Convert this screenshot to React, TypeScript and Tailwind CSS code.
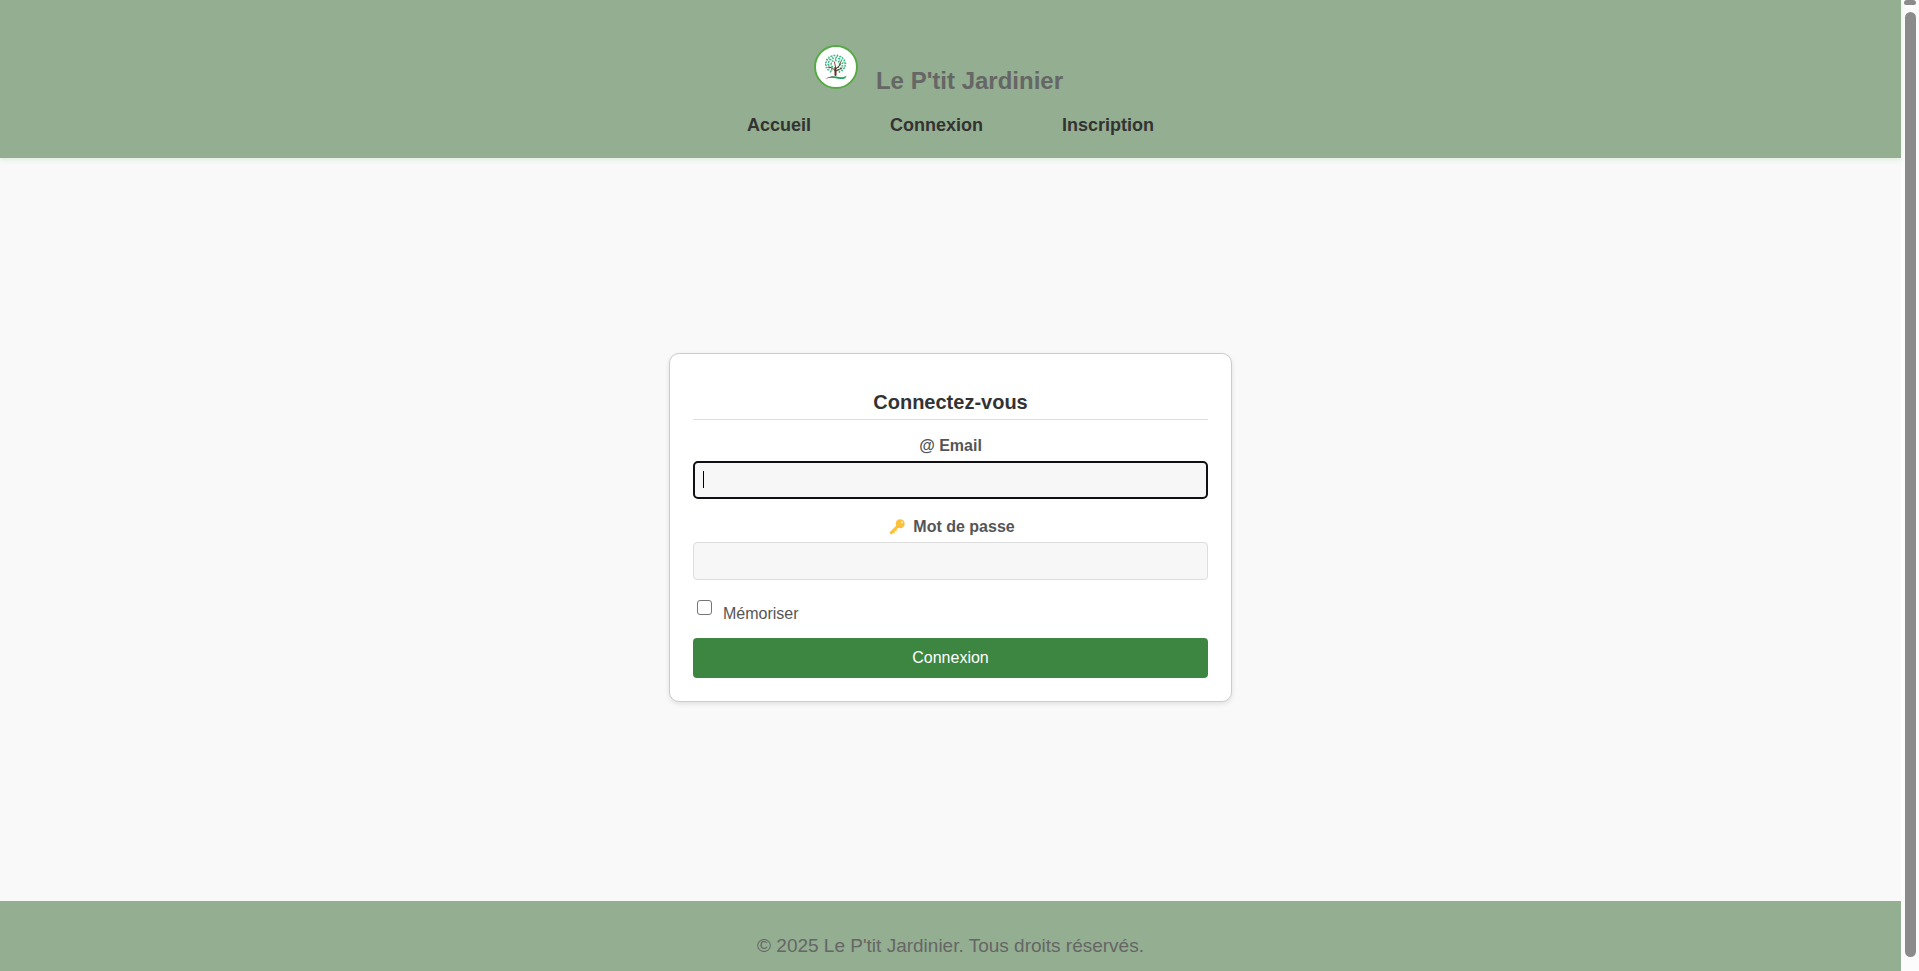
const navLinks = ['Accueil', 'Connexion', 'Inscription'];

const leafRings = [
  { radius: 9, count: 20 },
  { radius: 6.6, count: 14 },
  { radius: 4, count: 8 },
];

const leaves = leafRings.flatMap(({ radius, count }) =>
  Array.from({ length: count }, (_, i) => {
    const angle = (i / count) * Math.PI * 2 + radius;
    return { x: 21.5 + Math.cos(angle) * radius * 1.08, y: 19 + Math.sin(angle) * radius * 0.95, turn: i * 67 };
  }).filter(({ x, y }) => y < 26 || Math.abs(x - 21.5) > 4),
);

function Logo() {
  return (
    <svg viewBox="0 0 44 44" className="size-11" role="img" aria-label="Logo">
      <circle cx="22" cy="22" r="21" fill="#fff" stroke="#56aa46" strokeWidth="2" />
      <g fill="#3dba85">
        {leaves.map(({ x, y, turn }, i) => (
          <ellipse key={i} cx={x} cy={y} rx="1.3" ry="0.8" transform={`rotate(${turn} ${x} ${y})`} />
        ))}
      </g>
      <g fill="none" stroke="#6b2a26" strokeLinecap="round">
        <path d="M21.5 30V23" strokeWidth="2" />
        <path d="M21.5 26l-3-3-4-1M21.5 24l4-3 1-4M21.5 22l-1-5M22 26l6-3" strokeWidth="0.9" />
      </g>
      <path d="M13 33.2c4-2.6 8-2.2 12-1.2 3.500 .8 6-.2 7.500-1.500 0 2.600-2.500 3.800-6 3.600-4.500-.6-8-2-13.500-.9z" fill="#1da35c" />
      <path d="M11 34c3-2 6-2.400 9-2.400-3 1-5 1.400-9 2.400z" fill="#8a5a50" />
    </svg>
  );
}

function KeyIcon() {
  return (
    <svg viewBox="0 0 16 16" className="size-4" aria-hidden="true">
      <path d="M2.200 13.800L9 7" stroke="#fbc13c" strokeWidth="3" strokeLinecap="round" />
      <path d="M4 12.500l1.600 1.200M6 10.500l1.600 1.200" stroke="#fbc13c" strokeWidth="1.400" />
      <circle cx="11.200" cy="4.800" r="4.500" fill="#fbc13c" />
      <circle cx="12.900" cy="3.300" r="0.900" fill="#fff" />
    </svg>
  );
}

function Header() {
  return (
    <header className="relative flex h-[158px] shrink-0 flex-col items-center bg-[#93ae90] pt-[45px] shadow-[0_2px_5px_rgba(76,175,80,0.15)]">
      <div className="flex items-start gap-[18px] pr-6">
        <Logo />
        <h1 className="pt-[22px] text-2xl leading-[28px] font-bold text-[#666]">Le P'tit Jardinier</h1>
      </div>
      <nav className="mt-5 flex gap-[79px]">
        {navLinks.map((label) => (
          <a key={label} href="#" className="text-lg leading-5 font-bold text-[#333]">
            {label}
          </a>
        ))}
      </nav>
    </header>
  );
}

function LoginForm() {
  return (
    <form className="w-full max-w-[563px] rounded-[10px] border border-[#ccc] bg-white px-[23px] pt-9 pb-[23px] shadow-[0_2px_5px_rgba(0,0,0,0.1)]">
      <h2 className="border-b border-[#ddd] pb-1 text-center text-xl leading-[25px] font-bold text-[#333]">
        Connectez-vous
      </h2>

      <label htmlFor="email" className="mt-4 mb-[5px] block text-center leading-5 font-bold text-[#555]">
        @ Email
      </label>
      <div className="relative">
        <input
          id="email"
          type="email"
          autoFocus
          className="block h-[38px] w-full rounded-[5px] border-2 border-[#101014] bg-[#f7f7f7] px-2 text-[#333] caret-transparent outline-none"
        />
        <span className="absolute top-[10px] left-[10px] h-[17px] w-px bg-black" />
      </div>

      <label
        htmlFor="password"
        className="mt-[18px] mb-[5px] flex items-center justify-center gap-2 pl-[3px] leading-5 font-bold text-[#555]"
      >
        <KeyIcon />
        Mot de passe
      </label>
      <input
        id="password"
        type="password"
        className="block h-[38px] w-full rounded border border-[#ddd] bg-[#f7f7f7] px-2 text-[#333] outline-none"
      />

      <div className="mt-5 flex items-start gap-[11px] pl-1">
        <input
          id="remember"
          type="checkbox"
          className="size-[15px] appearance-none rounded-[3px] border border-[#767676] bg-white checked:bg-[#3c8641]"
        />
        <label htmlFor="remember" className="pt-1 leading-5 text-[#555]">
          Mémoriser
        </label>
      </div>

      <button type="submit" className="mt-[14px] h-10 w-full rounded bg-[#3c8641] text-base text-white">
        Connexion
      </button>
    </form>
  );
}

function Scrollbar() {
  return (
    <div className="flex w-[18px] shrink-0 flex-col items-center bg-[#fcfcfc] pb-[14px]" aria-hidden="true">
      <div className="h-[5px] w-3 rounded-t-md rounded-b-sm bg-[#8b8b8b]" />
      <div className="mt-[7px] w-[11px] flex-1 rounded-full bg-[#8b8b8b]" />
    </div>
  );
}

export default function App() {
  return (
    <div className="flex h-screen overflow-hidden bg-[#f9f9f9] font-['Liberation_Sans',Arial,sans-serif]">
      <div className="flex min-w-0 flex-1 flex-col">
        <Header />
        <main className="flex flex-1 items-center justify-center pb-1">
          <LoginForm />
        </main>
        <footer className="h-[70px] shrink-0 bg-[#93ae90] pt-[34px] text-center text-[19px] leading-[22px] text-[#666]">
          © 2025 Le P'tit Jardinier. Tous droits réservés.
        </footer>
      </div>
      <Scrollbar />
    </div>
  );
}
